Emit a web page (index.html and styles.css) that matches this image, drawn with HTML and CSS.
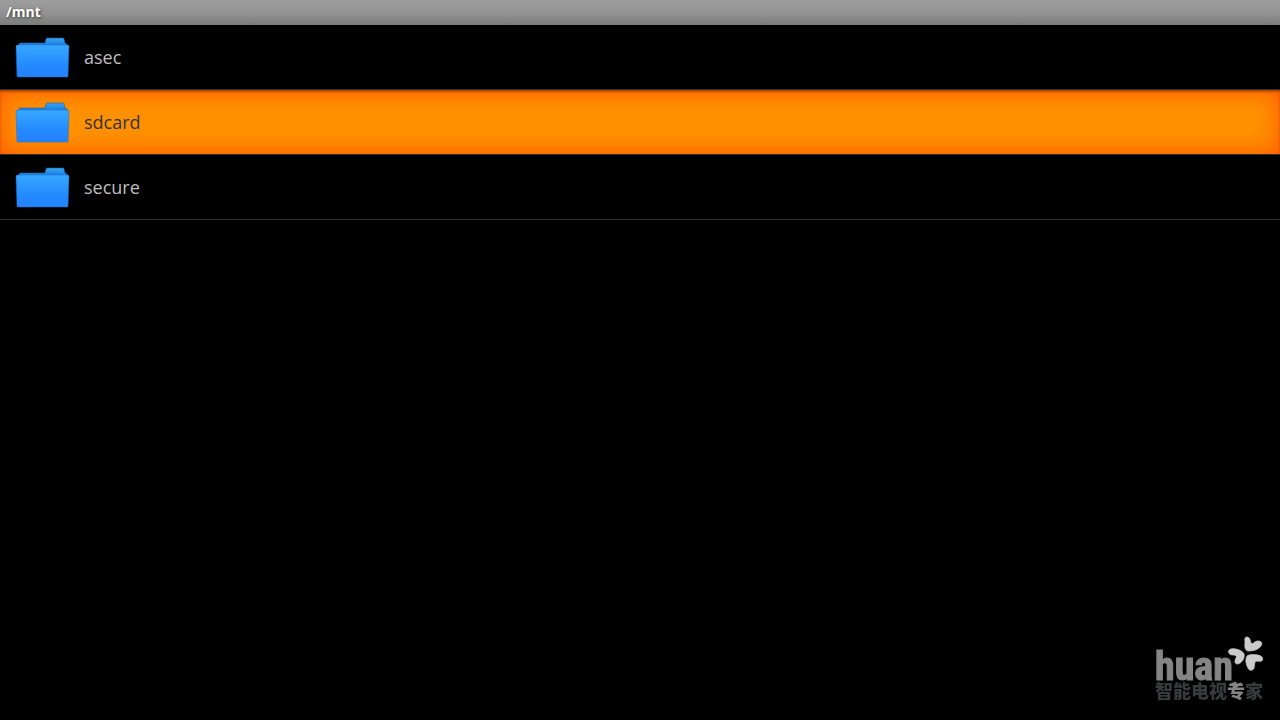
FILE: index.html
```html
<!DOCTYPE html>
<html lang="en">
<head>
<meta charset="utf-8">
<title>/mnt</title>
<link rel="stylesheet" href="styles.css">
</head>
<body>
<svg class="defs" aria-hidden="true">
  <defs>
    <linearGradient id="front" x1="0" y1="0" x2="0" y2="1">
      <stop offset="0" stop-color="#37a8ff"/>
      <stop offset="0.65" stop-color="#2389ff"/>
      <stop offset="1" stop-color="#2483ff"/>
    </linearGradient>
    <linearGradient id="back" x1="0" y1="0" x2="0" y2="1">
      <stop offset="0" stop-color="#38a6f5"/>
      <stop offset="0.6" stop-color="#1f80e4"/>
    </linearGradient>
    <symbol id="folder" viewBox="0 0 56 44">
      <path d="M5 10V9Q5 8 7 8H31L32 4Q32 3 34 3H49Q50 3 50 4L51 8L53 9V14H5Z" fill="url(#back)" stroke="#17619c" stroke-width="0.6"/>
      <path d="M2 11Q2 10 4 10H53Q55 10 55 11L54 41Q54 42 53 42H4Q3 42 3 41Z" fill="url(#front)" stroke="#1c6fc4" stroke-width="0.5"/>
    </symbol>
  </defs>
</svg>
<header class="title-bar"><h1 class="title">/mnt</h1></header>
<main>
  <ul class="files">
    <li class="item"><button class="file"><svg class="folder"><use href="#folder"/></svg><span>asec</span></button></li>
    <li class="item"><button class="file selected"><svg class="folder"><use href="#folder"/></svg><span>sdcard</span></button></li>
    <li class="item"><button class="file"><svg class="folder"><use href="#folder"/></svg><span>secure</span></button></li>
  </ul>
</main>
<aside class="brand">
  <div class="brand-name">huan</div>
  <div class="brand-line">智能电视<span class="accent">专</span>家</div>
  <svg class="petals" viewBox="0 0 36 36" aria-hidden="true">
    <g fill="#cbcbcb" stroke="#cbcbcb" stroke-width="0.8" stroke-linejoin="round">
      <path d="M17 5C16 1 19 0 21 2C23 4 22 7 24 8C26 7 27 5 30 5C34 5 35 8 32 11C29 14 25 15 20 15C16 14 17 9 17 5Z"/>
      <path d="M3 13C8 12 15 15 16 18C17 23 13 28 9 28C6 27 7 25 8 22C9 20 8 19 5 19C0 19-1 14 3 13Z"/>
      <path d="M19 20C22 18 31 18 34 21C36 25 33 26 29 25C26 25 27 29 26 32C25 35 21 35 20 32C18 28 17 24 19 20Z"/>
    </g>
  </svg>
  <svg class="antenna" viewBox="0 0 14 6" aria-hidden="true"><path d="M2 1L6 5L11 1" fill="none" stroke="#858585" stroke-width="2"/></svg>
</aside>
</body>
</html>
```
FILE: styles.css
```css
body {
  margin: 0;
  min-height: 100vh;
  background: #000;
  color: #bebebe;
  font-family: "Open Sans", "Noto Sans", "Noto Sans CJK SC", sans-serif;
}

.defs {
  position: absolute;
  width: 0;
  height: 0;
}

.title-bar {
  height: 25px;
  padding-left: 6px;
  display: flex;
  align-items: flex-start;
  background: linear-gradient(#9d9d9d, #959595 45%, #7b7d7b);
}

.title {
  margin: 0;
  color: #fff;
  font-size: 14px;
  line-height: 24px;
  font-weight: 700;
  text-shadow: 1px 1px 3px #333;
}

.files {
  margin: 0;
  padding: 0;
  list-style: none;
}

.item {
  border-bottom: 1px solid #303030;
}

.file {
  width: 100%;
  height: 64px;
  padding: 0 14px;
  border: 0;
  display: flex;
  align-items: center;
  gap: 14px;
  background: transparent;
  color: inherit;
  font-family: inherit;
  font-size: 18px;
  line-height: 24px;
  text-align: left;
}

.selected {
  background: #ff9200;
  color: #333;
  box-shadow: inset 0 2px 2px #b54800, inset 0 0 26px #ff5200;
}

.folder {
  width: 56px;
  height: 44px;
}

.brand {
  position: fixed;
  right: 17px;
  bottom: 22px;
  width: 108px;
}

.brand-name {
  color: #858585;
  font: 700 40px/30px "Roboto Condensed", Roboto, sans-serif;
  -webkit-text-stroke: 1px #858585;
}

.brand-line {
  color: #383b3b;
  font: 900 18px/16px "Noto Sans CJK SC", sans-serif;
  white-space: nowrap;
}

.accent {
  color: #858585;
}

.petals {
  position: absolute;
  right: -1px;
  bottom: 26px;
  width: 36px;
  height: 36px;
}

.antenna {
  position: absolute;
  right: 19px;
  bottom: 10px;
  width: 14px;
  height: 6px;
}
```
